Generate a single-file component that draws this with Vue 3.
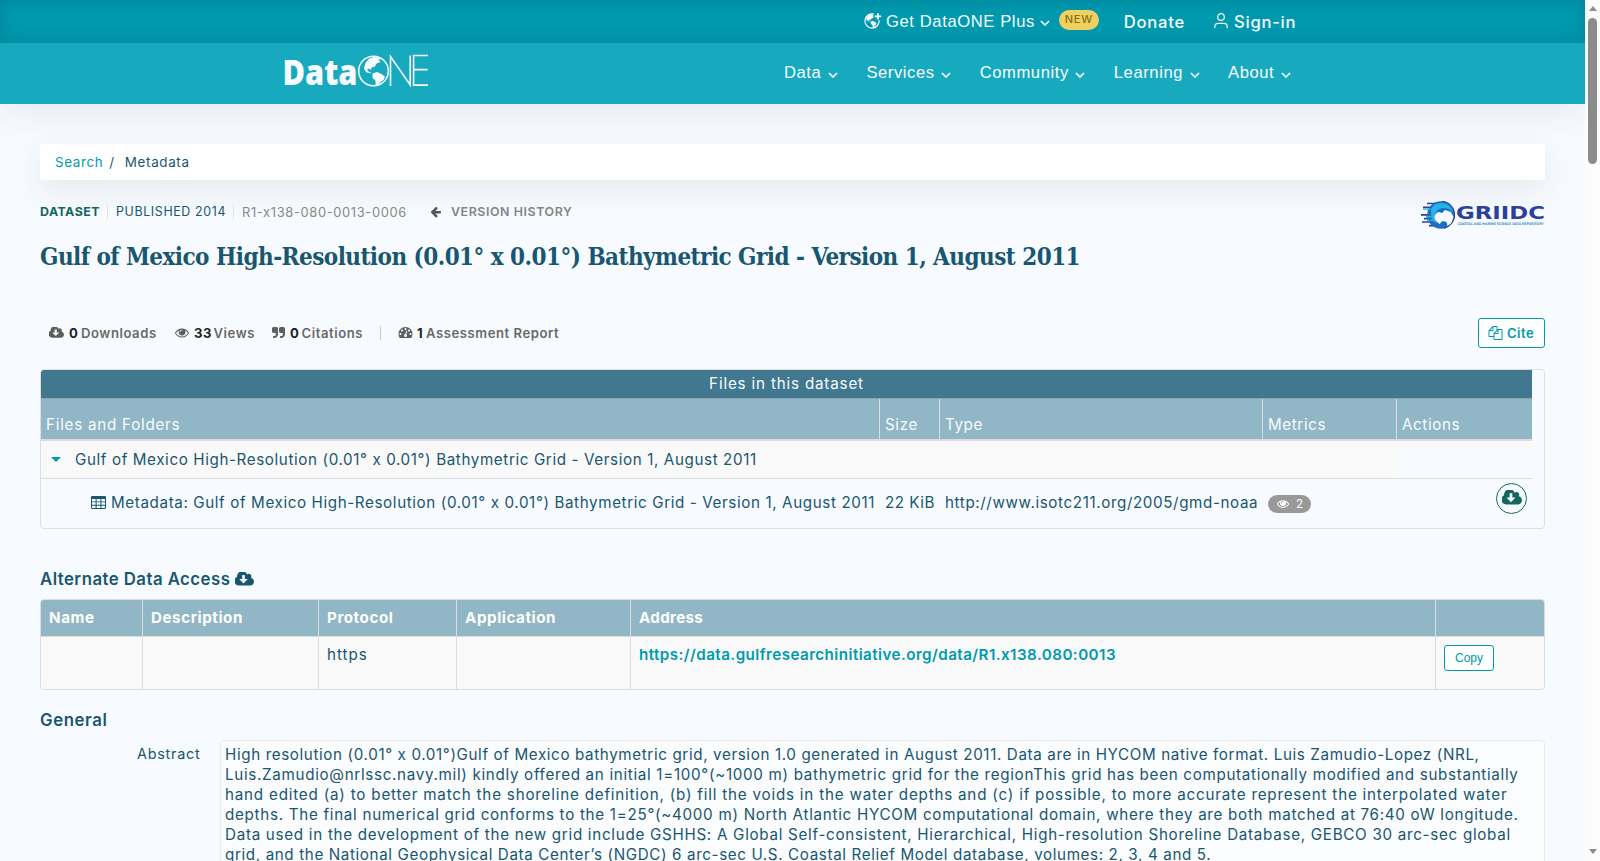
<template>
  <div class="window">
    <div class="page">
      <!-- Header -->
      <header class="header">
        <div class="topbar">
          <svg class="plus-globe" viewBox="0 0 18 18">
            <path d="M10.3 2.1A7.1 7.1 0 1 0 15.6 8.2" fill="none" stroke="currentColor" stroke-width="1.2" />
            <path d="M3 5.2L5.4 2.9 8.6 2.2 10 3 9.4 4.3 10.3 5.2 8.7 6.6 7.4 6.9 6.9 8.3 5.8 7.7 4.9 8.4 6.6 9.3 7.4 9.3 5.4 9.6 3.3 8.2 2.6 7z" fill="currentColor" />
            <path d="M7.4 9.3L9.6 9 12.4 10.6 13 11.7 11.8 13.3 10.2 15.3 9.4 15.6 9.1 13.4 7.7 12.1 7 10.6z" fill="currentColor" />
            <path d="M14.4 1.2v6.4M11.2 4.4h6.4" stroke="currentColor" stroke-width="1.7" />
          </svg>
          <a class="plus">Get DataONE Plus</a>
          <svg class="chevron" viewBox="0 0 10 6"><path d="M1 1l4 4 4-4" /></svg>
          <span class="new-badge">NEW</span>
          <a class="donate">Donate</a>
          <svg class="user" viewBox="0 0 14 16">
            <circle cx="7" cy="4" r="3.3" />
            <path d="M.8 15.3v-1.6c0-2 1.3-3.3 3.3-3.3h5.8c2 0 3.3 1.3 3.3 3.3v1.6" />
          </svg>
          <a class="signin">Sign-in</a>
        </div>
        <div class="navbar">
          <svg class="logo" viewBox="0 0 146 46">
            <text x="-2.5" y="36" class="logo-data" textLength="75" lengthAdjust="spacingAndGlyphs">Data</text>
            <circle cx="88.5" cy="22" r="14.8" fill="#17aabf" stroke="#f7fbff" stroke-width="1.5" />
            <path fill="#f7fbff" d="M80.500 14l3-4 5-2 5 .4 3 1.6-3 .6 2 2.400-4 1.600-1.600 3-3.200.8-.8 2.600-2-1.400-2 1.400 2.600 2.200 1.800.2-1 1.200-4-1.400-2.400-3.600z" />
            <path fill="#f7fbff" d="M87.500 24.400l4.400-1.400 4.600 2 3.400 2.600-1.200 3.200-3.600 2.600-2.400 3.200-2 .2-.2-5-3-3z" />
            <g fill="none" stroke="#f7fbff">
              <path stroke-width="1.6" d="M105.500 37V7.600L125.200 36V6.500" />
              <path stroke-width="1.6" d="M143 6.500H128.600v29.600H143M128.600 20.600h14" />
            </g>
          </svg>
          <nav class="menu">
            <a v-for="item in menu" :key="item" class="menu-item">
              {{ item }}
              <svg class="chevron" viewBox="0 0 10 6"><path d="M1 1l4 4 4-4" /></svg>
            </a>
          </nav>
        </div>
      </header>

      <main class="content">
        <div class="breadcrumb">
          <a>Search</a><span class="slash">/</span><span>Metadata</span>
        </div>

        <div class="meta">
          <span class="dataset">DATASET</span>
          <span class="published">PUBLISHED 2014</span>
          <span class="identifier">R1-x138-080-0013-0006</span>
          <svg class="arrow" viewBox="64 200 1600 1600"><path :d="icons.arrow" /></svg>
          <span class="history">VERSION HISTORY</span>
          <svg class="griidc" viewBox="0 0 126 32">
            <g stroke="#2b3f9b" stroke-width="1.7">
              <path d="M8 4.5h14M4 8.3h16M9 12h10M2 15.8h16M5 19.6h14M3 23h15M10 26.6h10" />
            </g>
            <circle cx="22" cy="16" r="13.8" fill="#1b6fc0" />
            <path d="M12 13c0-6 5-9 10-9 7 0 11 5 12 9-4-4-12-6-16-1-3 4-3 8 0 13-4-2-6-7-6-12z" fill="#25b4e4" />
            <path d="M17 22c-3-4-1-8 3-9l3 1 3-3 6 2 2.500 5-2 6-4 3-1-4-4-1-3 3z" fill="#f7fbff" />
            <path d="M23 2.4c8 0 13 7 12.6 14.5-.4 6-5 11-10.6 12.5" fill="none" stroke="#2b3f9b" stroke-width="1" />
            <path d="M4 10.2h9M7 17.7h8M8 21.3h7" stroke="#25b4e4" stroke-width="1.2" />
            <text x="37" y="20" class="griidc-name" textLength="89" lengthAdjust="spacingAndGlyphs">GRIIDC</text>
            <text x="38.5" y="26.3" class="griidc-sub" textLength="86" lengthAdjust="spacingAndGlyphs">COASTAL AND MARINE SCIENCE DATA REPOSITORY</text>
          </svg>
        </div>

        <h1 class="title">{{ title }}</h1>

        <!-- Metrics row -->
        <div class="stats">
          <span class="stat downloads">
            <svg viewBox="0 256 1856 1280"><path :d="icons.cloud" /></svg><b>0</b>Downloads
          </span>
          <span class="stat views">
            <svg viewBox="0 384 1792 1152"><path :d="icons.eye" /></svg><b>33</b>Views
          </span>
          <span class="stat citations">
            <svg viewBox="64 128 1664 1408"><path :d="icons.quote" /></svg><b>0</b>Citations
          </span>
          <span class="stat report">
            <svg viewBox="0 256 1792 1408"><path :d="icons.gauge" /></svg><b>1</b>Assessment Report
          </span>
          <button class="cite">
            <svg viewBox="0 0 1792 1792"><path :d="icons.files" /></svg>Cite
          </button>
        </div>

        <!-- Files -->
        <section class="files">
          <div class="files-caption">Files in this dataset</div>
          <div class="files-head">
            <span v-for="col in fileColumns" :key="col">{{ col }}</span>
          </div>
          <div class="files-folder">
            <div class="folder-name">
              <i class="caret"></i>{{ title }}
            </div>
            <div class="folder-actions"></div>
          </div>
          <div class="files-row">
            <span class="file-name">
              <svg viewBox="0 0 15 13">
                <path fill-rule="evenodd" d="M1.2 0h12.6Q15 0 15 1.2v10.6Q15 13 13.8 13H1.2Q0 13 0 11.8V1.2Q0 0 1.2 0zM1 3h3.600v2.400H1zM5.600 3h3.800v2.400H5.600zM10.400 3H14v2.400h-3.600zM1 6.300h3.600v2.500H1zM5.600 6.300h3.800v2.500H5.600zM10.400 6.300H14v2.500h-3.600zM1 9.700h3.600V12H1zM5.600 9.700h3.800V12H5.600zM10.400 9.700H14V12h-3.600z" />
              </svg>
              Metadata: {{ title }}
            </span>
            <span class="file-size">22 KiB</span>
            <span class="file-type">http://www.isotc211.org/2005/gmd-noaa</span>
            <span class="file-metrics">
              <span class="view-badge">
                <svg viewBox="0 384 1792 1152"><path :d="icons.eye" /></svg>2
              </span>
            </span>
            <span class="file-actions">
              <a class="download"><svg viewBox="0 256 1856 1280"><path :d="icons.cloud" /></svg></a>
            </span>
          </div>
        </section>

        <h2 class="section-title">
          Alternate Data Access
          <svg viewBox="0 256 1856 1280"><path :d="icons.cloud" /></svg>
        </h2>
        <section class="access">
          <div class="access-grid access-head">
            <span>Name</span><span>Description</span><span>Protocol</span>
            <span>Application</span><span>Address</span><span></span>
          </div>
          <div class="access-grid access-row">
            <span></span><span></span><span class="protocol">https</span><span></span>
            <span><a>https://data.gulfresearchinitiative.org/data/R1.x138.080:0013</a></span>
            <span><button class="copy">Copy</button></span>
          </div>
        </section>

        <h2 class="section-title general">General</h2>
        <div class="field">
          <label>Abstract</label>
          <div class="abstract">
            <p v-for="line in abstract" :key="line">{{ line }}</p>
          </div>
        </div>
      </main>
    </div>

    <div class="scrollbar">
      <i class="scroll-up"></i>
      <i class="scroll-thumb"></i>
      <i class="scroll-down"></i>
    </div>
  </div>
</template>

<script setup>
const title = 'Gulf of Mexico High-Resolution (0.01° x 0.01°) Bathymetric Grid - Version 1, August 2011';

const menu = ['Data', 'Services', 'Community', 'Learning', 'About'];

const fileColumns = ['Files and Folders', 'Size', 'Type', 'Metrics', 'Actions'];

const abstract = [
  'High resolution (0.01° x 0.01°)Gulf of Mexico bathymetric grid, version 1.0 generated in August 2011. Data are in HYCOM native format. Luis Zamudio-Lopez (NRL,',
  'Luis.Zamudio@nrlssc.navy.mil) kindly offered an initial 1=100°(~1000 m) bathymetric grid for the regionThis grid has been computationally modified and substantially',
  'hand edited (a) to better match the shoreline definition, (b) fill the voids in the water depths and (c) if possible, to more accurate represent the interpolated water',
  'depths. The final numerical grid conforms to the 1=25°(~4000 m) North Atlantic HYCOM computational domain, where they are both matched at 76:40 oW longitude.',
  'Data used in the development of the new grid include GSHHS: A Global Self-consistent, Hierarchical, High-resolution Shoreline Database, GEBCO 30 arc-sec global',
  'grid, and the National Geophysical Data Center’s (NGDC) 6 arc-sec U.S. Coastal Relief Model database, volumes: 2, 3, 4 and 5.'
];

const icons = {
  arrow: 'M1664 896v128q0 53-32.5 90.5t-84.5 37.5h-704l293 294q38 36 38 90t-38 90l-75 76q-37 37-90 37-52 0-91-37l-651-652q-37-37-37-90 0-52 37-91l651-650q38-38 91-38 52 0 90 38l75 74q38 38 38 91t-38 91l-293 293h704q52 0 84.5 37.5t32.5 90.5z',
  cloud: 'M1216 928q0-14-9-23t-23-9h-224v-352q0-13-9.5-22.5t-22.5-9.5h-192q-13 0-22.5 9.5t-9.5 22.5v352h-224q-13 0-22.5 9.5t-9.5 22.5q0 14 9 23l352 352q9 9 23 9t23-9l351-351q10-12 10-24zm640 224q0 159-112.5 271.5t-271.5 112.5h-1088q-185 0-316.5-131.5t-131.5-316.5q0-130 70-240t188-165q-2-30-2-43 0-212 150-362t362-150q156 0 285.5 87t188.5 231q71-62 166-62 106 0 181 75t75 181q0 76-41 138 130 31 213.5 135.5t83.5 238.5z',
  eye: 'M1664 960q-152-236-381-353 61 104 61 225 0 185-131.5 316.5t-316.5 131.5-316.5-131.5-131.5-316.5q0-121 61-225-229 117-381 353 133 205 333.5 326.5t434.5 121.5 434.5-121.5 333.5-326.5zm-720-384q0-20-14-34t-34-14q-125 0-214.5 89.5t-89.5 214.5q0 20 14 34t34 14 34-14 14-34q0-86 61-147t147-61q20 0 34-14t14-34zm848 384q0 34-20 69-140 230-376.5 368.5t-499.5 138.5-499.5-139-376.5-368q-20-35-20-69t20-69q140-229 376.5-368t499.5-139 499.5 139 376.5 368q20 35 20 69z',
  quote: 'M832 320v704q0 104-40.5 198.5t-109.5 163.5-163.5 109.5-198.5 40.5h-64q-26 0-45-19t-19-45v-128q0-26 19-45t45-19h64q106 0 181-75t75-181v-32q0-40-28-68t-68-28h-224q-80 0-136-56t-56-136v-384q0-80 56-136t136-56h384q80 0 136 56t56 136zm896 0v704q0 104-40.5 198.5t-109.5 163.5-163.5 109.5-198.5 40.5h-64q-26 0-45-19t-19-45v-128q0-26 19-45t45-19h64q106 0 181-75t75-181v-32q0-40-28-68t-68-28h-224q-80 0-136-56t-56-136v-384q0-80 56-136t136-56h384q80 0 136 56t56 136z',
  gauge: 'M384 1152q0-53-37.5-90.5t-90.5-37.5-90.5 37.5-37.5 90.5 37.5 90.5 90.5 37.5 90.5-37.5 37.5-90.5zm192-448q0-53-37.5-90.5t-90.5-37.5-90.5 37.5-37.5 90.5 37.5 90.5 90.5 37.5 90.5-37.5 37.5-90.5zm428 481l101-382q6-26-7.5-48.5t-38.5-29.5-48 6.5-30 39.5l-101 382q-60 5-107 43.5t-63 98.5q-20 77 20 146t117 89 146-20 89-117q16-60-6-117t-72-91zm660-33q0-53-37.5-90.5t-90.5-37.5-90.5 37.5-37.5 90.5 37.5 90.5 90.5 37.5 90.5-37.5 37.5-90.5zm-640-640q0-53-37.5-90.5t-90.5-37.5-90.5 37.5-37.5 90.5 37.5 90.5 90.5 37.5 90.5-37.5 37.5-90.5zm448 192q0-53-37.5-90.5t-90.5-37.5-90.5 37.5-37.5 90.5 37.5 90.5 90.5 37.5 90.5-37.5 37.5-90.5zm320 448q0 261-141 483-19 29-54 29h-1402q-35 0-54-29-141-221-141-483 0-182 71-348t191-286 286-191 348-71 348 71 286 191 191 286 71 348z',
  files: 'M1696 384q40 0 68 28t28 68v1216q0 40-28 68t-68 28h-960q-40 0-68-28t-28-68v-288h-544q-40 0-68-28t-28-68v-672q0-40 20-88t48-76l408-408q28-28 76-48t88-20h416q40 0 68 28t28 68v328q68-40 128-40h416zm-544 213l-299 299h299v-299zm-640-384l-299 299h299v-299zm196 647l316-316v-416h-384v416q0 40-28 68t-68 28h-416v640h512v-256q0-40 20-88t48-76zm956 804v-1152h-384v416q0 40-28 68t-68 28h-416v640h896z'
};
</script>

<style>
body {
  background: #f7fbff;
}
</style>

<style scoped>
* {
  box-sizing: border-box;
}

.window {
  display: flex;
  height: 861px;
  overflow: hidden;
  background: #f7fbff;
  color: #19566f;
  font-family: Inter, "Liberation Sans", sans-serif;
  font-size: 15.2px;
  letter-spacing: 0.61px;
  white-space: nowrap;
}

.page {
  width: 1585px;
  overflow: hidden;
}

svg {
  display: block;
  flex: none;
  fill: currentColor;
}

/* Header */
.header {
  height: 104px;
  color: #f7fbff;
  box-shadow: 0 10px 30px rgba(50, 55, 50, 0.08);
}

.topbar {
  display: flex;
  align-items: center;
  height: 43px;
  padding-left: 863px;
  background: #009aaf;
  box-shadow: inset 0 0 20px rgba(0, 60, 80, 0.22);
}

.plus-globe {
  width: 19px;
  height: 18px;
  margin: -1px 4px 0 0;
}

.plus {
  font: 16.6px/20px "Liberation Sans", sans-serif;
  letter-spacing: 0.6px;
}

.chevron {
  width: 10px;
  height: 6px;
  fill: none;
  stroke: currentColor;
  stroke-width: 1.7;
}

.topbar .chevron {
  margin: 2px 9px 0 5px;
}

.new-badge {
  width: 40px;
  height: 20px;
  margin-top: -3px;
  border-radius: 10px;
  background: #efd060;
  color: #86701c;
  font-size: 11px;
  font-weight: 500;
  line-height: 19px;
  letter-spacing: 0.7px;
  text-align: center;
}

.donate,
.signin {
  font-size: 16.6px;
  font-weight: 500;
  line-height: 20px;
  letter-spacing: 0.75px;
}

.donate {
  margin-left: 25px;
}

.user {
  width: 14px;
  height: 16px;
  margin: -2px 6px 0 29px;
  fill: none;
  stroke: currentColor;
  stroke-width: 1.2;
}

.navbar {
  display: flex;
  height: 61px;
  padding-left: 285px;
  background: #17aabf;
}

.logo {
  width: 146px;
  height: 46px;
  margin-top: 6px;
  overflow: visible;
}

.logo-data {
  font: 800 36px "Open Sans", sans-serif;
  letter-spacing: 0;
  fill: #f7fbff;
}

.menu {
  display: flex;
  gap: 28.5px;
  margin-left: 353px;
  padding-top: 20px;
}

.menu-item {
  display: flex;
  align-items: center;
  gap: 6.5px;
  height: 20px;
  font: 16.6px/20px "Liberation Sans", sans-serif;
  letter-spacing: 0.58px;
}

.menu-item .chevron {
  margin-top: 3px;
}

/* Content */
.content {
  padding: 40px 40px 0;
}

.breadcrumb {
  display: flex;
  height: 36px;
  padding: 0 15px;
  border-radius: 3px;
  background: #fff;
  box-shadow: 0 10px 30px rgba(50, 55, 50, 0.09);
  font-size: 13.4px;
  line-height: 37px;
  letter-spacing: 0.65px;
}

.breadcrumb a {
  color: #009aae;
}

.slash {
  margin: 0 10px 0 6px;
}

.meta {
  display: flex;
  align-items: center;
  height: 24px;
  margin-top: 20px;
  font-size: 12.4px;
  line-height: 14px;
}

.dataset {
  color: #146660;
  font-weight: 700;
  letter-spacing: 0.46px;
}

.published {
  width: 127px;
  margin-left: 7px;
  padding-left: 8px;
  border-left: 1px solid #dfe3e8;
  border-right: 1px solid #dfe3e8;
  letter-spacing: 0.65px;
}

.identifier {
  width: 165px;
  margin-left: 8px;
  padding-top: 1px;
  color: #888;
  font-size: 12.9px;
  letter-spacing: 0.65px;
}

.arrow {
  width: 11px;
  height: 11px;
  margin-left: 23px;
  color: #555;
}

.history {
  margin-left: 10px;
  color: #858585;
  font-weight: 600;
  letter-spacing: 0.58px;
}

.griidc {
  width: 126px;
  height: 32px;
  margin: 6px 0 0 auto;
  overflow: visible;
}

.griidc-name {
  font: 700 18px "DejaVu Sans", sans-serif;
  letter-spacing: 0;
  fill: #2b3f9b;
}

.griidc-sub {
  font: 700 3.6px "DejaVu Sans", sans-serif;
  letter-spacing: 0;
  fill: #3b8fd0;
}

.title {
  margin: 14px 0 0;
  height: 37px;
  font: 700 24px/37px "DejaVu Serif Condensed", "DejaVu Serif", serif;
  letter-spacing: -0.545px;
}

/* Stats */
.stats {
  display: flex;
  align-items: center;
  height: 30px;
  margin-top: 43px;
  padding-left: 9px;
  color: #686868;
  font-size: 13.1px;
  font-weight: 600;
}

.stat {
  display: flex;
  align-items: center;
  height: 14px;
  margin-top: -1px;
  letter-spacing: 0.56px;
}

.stat svg {
  height: 11px;
  color: #5e5e5e;
}

.stat b {
  color: #222;
  font-weight: 700;
}

.downloads svg {
  width: 15px;
  margin-right: 5px;
}

.downloads b {
  width: 12px;
}

.downloads {
  width: 126px;
}

.views svg {
  width: 14px;
  height: 10px;
  margin-right: 5px;
}

.views b {
  width: 19.5px;
}

.views {
  width: 97px;
}

.citations svg {
  width: 13px;
  margin-right: 5px;
}

.citations b {
  width: 11.5px;
}

.citations {
  width: 109px;
  border-right: 1px solid #ccc;
}

.report {
  margin-left: 17px;
}

.report svg {
  width: 15px;
  margin-right: 4px;
}

.report b {
  width: 9px;
}

.cite {
  display: flex;
  align-items: center;
  width: 67px;
  height: 30px;
  margin-left: auto;
  padding: 0 9px;
  border: 1px solid #009aae;
  border-radius: 3px;
  background: #fff;
  color: #009aae;
  font: 600 13px Inter, sans-serif;
  letter-spacing: 0.5px;
}

.cite svg {
  width: 15px;
  height: 14px;
  margin-right: 4px;
}

/* Files table */
.files {
  height: 160px;
  margin-top: 21px;
  border: 1px solid #dedede;
  border-radius: 4px;
  overflow: hidden;
}

.files > div {
  width: 1491px;
}

.files-caption {
  height: 29px;
  border-bottom: 1px solid #8fa3aa;
  background: #41788f;
  color: #f7fbff;
  line-height: 28px;
  letter-spacing: 0.82px;
  text-align: center;
}

.files-head,
.files-row {
  display: grid;
  grid-template-columns: 838px 60px 323px 134px 136px;
}

.files-head {
  height: 42px;
  border-bottom: 2px solid #ddd;
  background: #91b6c5;
  color: #f7fbff;
  line-height: 20px;
}

.files-head span {
  padding: 16px 0 0 5px;
  border-left: 1px solid #ddd;
}

.files-head span:first-child {
  border-left: none;
  letter-spacing: 0.75px;
}

.files-folder {
  display: flex;
  height: 38px;
  border-bottom: 1px solid #ddd;
  background: #f9f9f9;
}

.folder-name {
  display: flex;
  align-items: center;
  width: 1356px;
  height: 36px;
  padding-left: 10px;
}

.caret {
  width: 0;
  height: 0;
  margin-right: 14px;
  border: 5px solid transparent;
  border-top-color: #009aae;
  border-bottom: none;
}

.folder-actions {
  flex: 1;
  margin-top: 8px;
  background: #f7fbff;
}

.files-row {
  height: 49px;
  line-height: 48px;
}

.file-name {
  display: flex;
  align-items: center;
  height: 47px;
  padding-left: 50px;
}

.file-name svg {
  width: 15px;
  height: 13px;
  margin: 0 5px 0 0;
}

.file-size,
.file-type {
  padding-left: 6px;
}

.file-size {
  letter-spacing: 0.5px;
}

.file-metrics {
  padding: 16px 0 0 6px;
}

.view-badge {
  display: flex;
  align-items: center;
  width: 43px;
  height: 18px;
  padding-left: 9px;
  border-radius: 9px;
  background: #999;
  color: #fff;
  font-size: 11.5px;
  line-height: 18px;
}

.view-badge svg {
  width: 12px;
  height: 8px;
  margin-right: 7px;
}

.file-actions {
  display: flex;
  justify-content: flex-end;
  padding: 4px 5px 0 0;
}

.download {
  display: flex;
  align-items: center;
  justify-content: center;
  width: 31px;
  height: 31px;
  border: 1px solid #146660;
  border-radius: 50%;
  color: #146660;
}

.download svg {
  width: 20px;
  height: 15px;
  margin-top: -2px;
}

/* Alternate access */
.section-title {
  display: flex;
  align-items: center;
  height: 24px;
  margin: 38px 0 8px;
  font-size: 16.8px;
  font-weight: 600;
  line-height: 24px;
  letter-spacing: 0.46px;
}

.section-title svg {
  width: 19px;
  height: 14px;
  margin: -1px 0 0 5px;
}

.general {
  margin-top: 18px;
  letter-spacing: 0.6px;
}

.access {
  height: 91px;
  border: 1px solid #dcdcdc;
  border-radius: 4px;
  overflow: hidden;
}

.access-grid {
  display: grid;
  grid-template-columns: 101px 176px 138px 174px 805px 109px;
}

.access-grid span {
  padding-left: 8px;
  border-left: 1px solid #dcdcdc;
}

.access-grid span:first-child {
  border-left: none;
}

.access-head {
  height: 37px;
  border-bottom: 1px solid #dcdcdc;
  background: #91b6c5;
  color: #fff;
  font-weight: 700;
  line-height: 36px;
  letter-spacing: 0.55px;
}

.access-head span:nth-child(5) {
  letter-spacing: 0.3px;
}

.access-row {
  height: 52px;
  background: #f9f9f9;
  line-height: 20px;
}

.access-row span {
  padding-top: 8px;
}

.access-row a {
  color: #009aae;
  font-weight: 600;
  letter-spacing: 0.441px;
}

.access-row .protocol {
  letter-spacing: 1px;
}

.copy {
  display: block;
  width: 50px;
  height: 26px;
  padding: 0;
  border: 1px solid #009aae;
  border-radius: 3px;
  background: #fff;
  color: #009aae;
  font: 12px "Liberation Sans", sans-serif;
}

/* Abstract */
.field {
  display: flex;
}

.field label {
  width: 160.5px;
  padding-top: 4px;
  font-size: 14.4px;
  line-height: 20px;
  letter-spacing: 0.75px;
  text-align: right;
}

.abstract {
  flex: 1;
  height: 200px;
  margin-left: 19.5px;
  padding: 4px;
  border: 1px solid #e8eaec;
  border-radius: 4px;
  background: #fbfcfe;
  line-height: 20px;
}

.abstract p {
  margin: 0;
  letter-spacing: 0.622px;
}

.abstract p:nth-child(2) {
  letter-spacing: 0.683px;
}

.abstract p:nth-child(3) {
  letter-spacing: 0.794px;
}

.abstract p:nth-child(4),
.abstract p:nth-child(5) {
  letter-spacing: 0.708px;
}

/* Window scrollbar */
.scrollbar {
  display: flex;
  flex-direction: column;
  align-items: center;
  width: 15px;
  padding: 6px 0 7px;
  background: #fcfcfc;
}

.scroll-up,
.scroll-down {
  border: 4.5px solid transparent;
}

.scroll-up {
  border-top: none;
  border-bottom: 5px solid #8b8b8b;
}

.scroll-down {
  margin-top: auto;
  border-bottom: none;
  border-top: 5px solid #8b8b8b;
}

.scroll-thumb {
  width: 9px;
  height: 146px;
  margin-top: 7px;
  border-radius: 5px;
  background: #8b8b8b;
}
</style>
